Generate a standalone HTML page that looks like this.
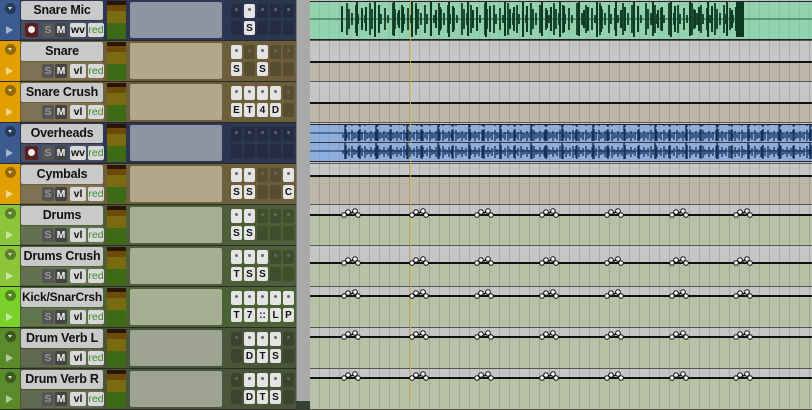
<!DOCTYPE html><html><head><style>
body{margin:0;width:812px;height:401px;overflow:hidden;background:#3a3f36;font-family:"Liberation Sans",sans-serif;position:relative}
.t{position:absolute;left:0;width:296px;height:41px;background:var(--bg);border-bottom:1px solid #2a2a26;box-sizing:border-box}
.bar{position:absolute;left:0;top:0;width:20px;height:40px;background:var(--c)}
.i1{position:absolute;left:5px;top:3px;width:11px;height:11px;border-radius:50%;background:rgba(0,0,0,.35)}
.i1:after{content:"";position:absolute;left:3px;top:4px;border:2.5px solid transparent;border-top:3px solid #ddd}
.i2{position:absolute;left:6px;top:26px;border:4.5px solid transparent;border-left:7px solid rgba(255,255,255,.55)}
.nm{position:absolute;left:21px;top:1px;width:82px;height:19px;background:#c9c9c9;border-radius:2px;font-weight:bold;font-size:12.5px;color:#111;text-align:center;line-height:19px;white-space:nowrap;letter-spacing:-.2px}
.ctl{position:absolute;left:21px;top:21px;width:82px;height:18px;background:rgba(255,255,255,.12);border-radius:2px}
.b{position:absolute;top:2px;height:14px;font-size:10.5px;font-weight:bold;text-align:center;line-height:14px;border-radius:2px}
.s{left:21px;width:12px;background:#555;color:#999}.m{left:34px;width:12px;background:#444;color:#eee}
.v{left:49px;width:16px;background:#d8d8d8;color:#111}.r{left:67px;width:16px;background:#d8d8d8;color:#3a8a2a;font-weight:normal}
.rec{left:4px;width:13px;background:#5a2020}.rec:after{content:"";position:absolute;left:3px;top:3px;width:7px;height:7px;border-radius:50%;background:#eee}
.mt{position:absolute;left:107px;top:1px;width:19px;height:38px;background:linear-gradient(#2a1505 0 4px,#6b4a0a 4px 10px,#7a6a10 10px 22px,#3d6a15 22px)}
.bx{position:absolute;left:130px;top:2px;width:92px;height:36px;background:var(--bx);border-radius:2px}
.g{position:absolute;width:11px;height:14px;border-radius:2px;background:rgba(0,0,0,.18);font-size:10px;font-weight:bold;text-align:center;line-height:15px;color:#111}
.g.on{background:#e4e4e4}
.g.d:after{content:"";position:absolute;left:4px;top:4px;width:3px;height:3px;border-radius:50%;background:#666}
.rul{position:absolute;left:296px;top:0;width:14px;height:401px;background:#a9a9a9;border-left:1px solid #777}
.a{position:absolute;left:310px;width:502px;height:41px;border-bottom:1px solid #555;box-sizing:border-box;background:repeating-linear-gradient(90deg,transparent 0 9px,rgba(0,0,0,.13) 9px 10px),linear-gradient(#c6c6c6 0 var(--h),var(--lo) var(--h))}
.ln{position:absolute;left:0;width:502px;height:2px;background:#111}
</style></head><body>
<div class="rul"></div>

<div class="t" style="top:0;--c:#3b5a8e;--bg:#2c3650;--bx:#8d95a5"><div class="bar"></div><div class="i1"></div><div class="i2"></div><div class="nm">Snare Mic</div><div class="ctl"><div class="b rec"></div><div class="b s">S</div><div class="b m">M</div><div class="b v">wv</div><div class="b r">red</div></div><div class="mt"></div><div class="bx"></div>
<div class="g d" style="left:231px;top:4px"></div><div class="g on d" style="left:244px;top:4px"></div><div class="g d" style="left:257px;top:4px"></div><div class="g d" style="left:270px;top:4px"></div><div class="g d" style="left:283px;top:4px"></div>
<div class="g" style="left:231px;top:21px"></div><div class="g on" style="left:244px;top:21px">S</div><div class="g" style="left:257px;top:21px"></div><div class="g" style="left:270px;top:21px"></div><div class="g" style="left:283px;top:21px"></div></div>

<div class="t" style="top:41px;--c:#e2a000;--bg:#6d5e3c;--bx:#b2a78b"><div class="bar"></div><div class="i1"></div><div class="i2"></div><div class="nm">Snare</div><div class="ctl"><div class="b s">S</div><div class="b m">M</div><div class="b v">vl</div><div class="b r">red</div></div><div class="mt"></div><div class="bx"></div>
<div class="g on d" style="left:231px;top:4px"></div><div class="g d" style="left:244px;top:4px"></div><div class="g on d" style="left:257px;top:4px"></div><div class="g d" style="left:270px;top:4px"></div><div class="g d" style="left:283px;top:4px"></div>
<div class="g on" style="left:231px;top:21px">S</div><div class="g" style="left:244px;top:21px"></div><div class="g on" style="left:257px;top:21px">S</div><div class="g" style="left:270px;top:21px"></div><div class="g" style="left:283px;top:21px"></div></div>

<div class="t" style="top:82px;--c:#e2a000;--bg:#6d5e3c;--bx:#b2a78b"><div class="bar"></div><div class="i1"></div><div class="i2"></div><div class="nm">Snare Crush</div><div class="ctl"><div class="b s">S</div><div class="b m">M</div><div class="b v">vl</div><div class="b r">red</div></div><div class="mt"></div><div class="bx"></div>
<div class="g on d" style="left:231px;top:4px"></div><div class="g on d" style="left:244px;top:4px"></div><div class="g on d" style="left:257px;top:4px"></div><div class="g on d" style="left:270px;top:4px"></div><div class="g d" style="left:283px;top:4px"></div>
<div class="g on" style="left:231px;top:21px">E</div><div class="g on" style="left:244px;top:21px">T</div><div class="g on" style="left:257px;top:21px">4</div><div class="g on" style="left:270px;top:21px">D</div><div class="g" style="left:283px;top:21px"></div></div>

<div class="t" style="top:123px;--c:#3b5a8e;--bg:#2c3650;--bx:#8d95a5"><div class="bar"></div><div class="i1"></div><div class="i2"></div><div class="nm">Overheads</div><div class="ctl"><div class="b rec"></div><div class="b s">S</div><div class="b m">M</div><div class="b v">wv</div><div class="b r">red</div></div><div class="mt"></div><div class="bx"></div>
<div class="g d" style="left:231px;top:4px"></div><div class="g d" style="left:244px;top:4px"></div><div class="g d" style="left:257px;top:4px"></div><div class="g d" style="left:270px;top:4px"></div><div class="g d" style="left:283px;top:4px"></div>
<div class="g" style="left:231px;top:21px"></div><div class="g" style="left:244px;top:21px"></div><div class="g" style="left:257px;top:21px"></div><div class="g" style="left:270px;top:21px"></div><div class="g" style="left:283px;top:21px"></div></div>

<div class="t" style="top:164px;--c:#e2a000;--bg:#6d5e3c;--bx:#b2a78b"><div class="bar"></div><div class="i1"></div><div class="i2"></div><div class="nm">Cymbals</div><div class="ctl"><div class="b s">S</div><div class="b m">M</div><div class="b v">vl</div><div class="b r">red</div></div><div class="mt"></div><div class="bx"></div>
<div class="g on d" style="left:231px;top:4px"></div><div class="g on d" style="left:244px;top:4px"></div><div class="g d" style="left:257px;top:4px"></div><div class="g d" style="left:270px;top:4px"></div><div class="g on d" style="left:283px;top:4px"></div>
<div class="g on" style="left:231px;top:21px">S</div><div class="g on" style="left:244px;top:21px">S</div><div class="g" style="left:257px;top:21px"></div><div class="g" style="left:270px;top:21px"></div><div class="g on" style="left:283px;top:21px">C</div></div>

<div class="t" style="top:205px;--c:#8cc43a;--bg:#4e5e38;--bx:#a6ae92"><div class="bar"></div><div class="i1"></div><div class="i2"></div><div class="nm">Drums</div><div class="ctl"><div class="b s">S</div><div class="b m">M</div><div class="b v">vl</div><div class="b r">red</div></div><div class="mt"></div><div class="bx"></div>
<div class="g on d" style="left:231px;top:4px"></div><div class="g on d" style="left:244px;top:4px"></div><div class="g d" style="left:257px;top:4px"></div><div class="g d" style="left:270px;top:4px"></div><div class="g d" style="left:283px;top:4px"></div>
<div class="g on" style="left:231px;top:21px">S</div><div class="g on" style="left:244px;top:21px">S</div><div class="g" style="left:257px;top:21px"></div><div class="g" style="left:270px;top:21px"></div><div class="g" style="left:283px;top:21px"></div></div>

<div class="t" style="top:246px;--c:#8cc43a;--bg:#4e5e38;--bx:#a6ae92"><div class="bar"></div><div class="i1"></div><div class="i2"></div><div class="nm">Drums Crush</div><div class="ctl"><div class="b s">S</div><div class="b m">M</div><div class="b v">vl</div><div class="b r">red</div></div><div class="mt"></div><div class="bx"></div>
<div class="g on d" style="left:231px;top:4px"></div><div class="g on d" style="left:244px;top:4px"></div><div class="g on d" style="left:257px;top:4px"></div><div class="g d" style="left:270px;top:4px"></div><div class="g d" style="left:283px;top:4px"></div>
<div class="g on" style="left:231px;top:21px">T</div><div class="g on" style="left:244px;top:21px">S</div><div class="g on" style="left:257px;top:21px">S</div><div class="g" style="left:270px;top:21px"></div><div class="g" style="left:283px;top:21px"></div></div>

<div class="t" style="top:287px;--c:#7cd02a;--bg:#4a6236;--bx:#a6ae92"><div class="bar"></div><div class="i1"></div><div class="i2"></div><div class="nm" style="font-size:12px">Kick/SnarCrsh</div><div class="ctl"><div class="b s">S</div><div class="b m">M</div><div class="b v">vl</div><div class="b r">red</div></div><div class="mt"></div><div class="bx"></div>
<div class="g on d" style="left:231px;top:4px"></div><div class="g on d" style="left:244px;top:4px"></div><div class="g on d" style="left:257px;top:4px"></div><div class="g on d" style="left:270px;top:4px"></div><div class="g on d" style="left:283px;top:4px"></div>
<div class="g on" style="left:231px;top:21px">T</div><div class="g on" style="left:244px;top:21px">7</div><div class="g on" style="left:257px;top:21px">::</div><div class="g on" style="left:270px;top:21px">L</div><div class="g on" style="left:283px;top:21px">P</div></div>

<div class="t" style="top:328px;--c:#5a8a2a;--bg:#4a5438;--bx:#9ea290"><div class="bar"></div><div class="i1"></div><div class="i2"></div><div class="nm">Drum Verb L</div><div class="ctl"><div class="b s">S</div><div class="b m">M</div><div class="b v">vl</div><div class="b r">red</div></div><div class="mt"></div><div class="bx"></div>
<div class="g d" style="left:231px;top:4px"></div><div class="g on d" style="left:244px;top:4px"></div><div class="g on d" style="left:257px;top:4px"></div><div class="g on d" style="left:270px;top:4px"></div><div class="g d" style="left:283px;top:4px"></div>
<div class="g" style="left:231px;top:21px"></div><div class="g on" style="left:244px;top:21px">D</div><div class="g on" style="left:257px;top:21px">T</div><div class="g on" style="left:270px;top:21px">S</div><div class="g" style="left:283px;top:21px"></div></div>

<div class="t" style="top:369px;--c:#5a8a2a;--bg:#4a5438;--bx:#9ea290"><div class="bar"></div><div class="i1"></div><div class="i2"></div><div class="nm">Drum Verb R</div><div class="ctl"><div class="b s">S</div><div class="b m">M</div><div class="b v">vl</div><div class="b r">red</div></div><div class="mt"></div><div class="bx"></div>
<div class="g d" style="left:231px;top:4px"></div><div class="g on d" style="left:244px;top:4px"></div><div class="g on d" style="left:257px;top:4px"></div><div class="g on d" style="left:270px;top:4px"></div><div class="g d" style="left:283px;top:4px"></div>
<div class="g" style="left:231px;top:21px"></div><div class="g on" style="left:244px;top:21px">D</div><div class="g on" style="left:257px;top:21px">T</div><div class="g on" style="left:270px;top:21px">S</div><div class="g" style="left:283px;top:21px"></div></div>

<div class="a" style="top:0;--h:0px;--lo:#c6c6c6"><div style="position:absolute;left:0;top:1px;width:502px;height:37px;background:repeating-linear-gradient(90deg,transparent 0 9px,rgba(0,0,0,.08) 9px 10px),#93d2ae;border-top:1px solid #222;border-bottom:1px solid #222"></div></div>
<div class="a" style="top:41px;--h:21px;--lo:#bcb7a6"><div class="ln" style="top:20px"></div></div>
<div class="a" style="top:82px;--h:21px;--lo:#bcb7a6"><div class="ln" style="top:20px"></div></div>
<div class="a" style="top:123px;--h:0px;--lo:#c6c6c6"><div style="position:absolute;left:0;top:1px;width:502px;height:36px;background:repeating-linear-gradient(90deg,transparent 0 9px,rgba(0,0,0,.08) 9px 10px),#8eafdc;border-top:1px solid #222;border-bottom:1px solid #222"></div><div style="position:absolute;left:0;top:19px;width:502px;height:1px;background:#334"></div></div>
<div class="a" style="top:164px;--h:12px;--lo:#bcb7a6"><div class="ln" style="top:11px"></div></div>
<div class="a" style="top:205px;--h:10px;--lo:#b7c1a6"><div class="ln" style="top:9px"></div></div>
<div class="a" style="top:246px;--h:17px;--lo:#b7c1a6"><div class="ln" style="top:16px"></div></div>
<div class="a" style="top:287px;--h:9px;--lo:#b7c1a6"><div class="ln" style="top:8px"></div></div>
<div class="a" style="top:328px;--h:9px;--lo:#b7c1a6"><div class="ln" style="top:8px"></div></div>
<div class="a" style="top:369px;--h:9px;--lo:#b7c1a6"><div class="ln" style="top:8px"></div></div>
<div style="position:absolute;left:410px;top:0;width:1px;height:401px;background:#d8b84a;opacity:.8"></div>

<svg style="position:absolute;left:0;top:0" width="812" height="401">
<defs>
<pattern id="g1" width="23" height="37" patternUnits="userSpaceOnUse"><path d="M2 19V3V35M4 19V9V29M7 19V13V25M11 19V5V33M13 19V14V24M17 19V8V30M20 19V15V23" stroke="#0f3a22" stroke-width="1.8"/></pattern>
<pattern id="g2" width="37" height="37" patternUnits="userSpaceOnUse"><path d="M5 19V1V37M9 19V6V32M24 19V2V36M29 19V10V28M33 19V7V31" stroke="#0f3a22" stroke-width="2"/></pattern>
<pattern id="b1" width="13" height="16" patternUnits="userSpaceOnUse"><path d="M1 8V2V14M3 8V5V11M5 8V6V10M7 8V3V13M9 8V6V10M11 8V4V12" stroke="#14305a" stroke-width="1.3"/></pattern>
<pattern id="b2" width="31" height="16" patternUnits="userSpaceOnUse"><path d="M4 8V0V16M5 8V1V15M18 8V2V14M19 8V1V15" stroke="#14305a" stroke-width="1.4"/></pattern>
<g id="au"><path d="M-8 0l4-3 3 1 4-2 3 4" fill="none" stroke="#111" stroke-width="1.5"/><circle cx="-8" cy="0" r="2.3" fill="#fff" stroke="#111"/><circle cx="-4" cy="-3" r="2.3" fill="#fff" stroke="#111"/><circle cx="3" cy="-4" r="2.3" fill="#fff" stroke="#111"/><circle cx="6" cy="0" r="2.3" fill="#fff" stroke="#111"/></g>
<g id="row"><use href="#au" x="352"/><use href="#au" x="420"/><use href="#au" x="485"/><use href="#au" x="550"/><use href="#au" x="615"/><use href="#au" x="680"/><use href="#au" x="744"/></g>
</defs>
<line x1="310" y1="19" x2="812" y2="19" stroke="#205a38"/>
<rect x="340" y="1" width="400" height="37" fill="url(#g1)"/>
<rect x="340" y="1" width="400" height="37" fill="url(#g2)"/>
<rect x="736" y="2" width="8" height="35" fill="#0f3a22"/>
<line x1="310" y1="133" x2="812" y2="133" stroke="#14305a"/>
<line x1="310" y1="151" x2="812" y2="151" stroke="#14305a"/>
<rect x="342" y="125" width="470" height="16" fill="url(#b1)"/>
<rect x="342" y="125" width="470" height="16" fill="url(#b2)"/>
<rect x="342" y="143" width="470" height="16" fill="url(#b1)"/>
<rect x="342" y="143" width="470" height="16" fill="url(#b2)"/>
<use href="#row" y="215"/><use href="#row" y="263"/><use href="#row" y="296"/><use href="#row" y="337"/><use href="#row" y="378"/>
</svg>
</body></html>
